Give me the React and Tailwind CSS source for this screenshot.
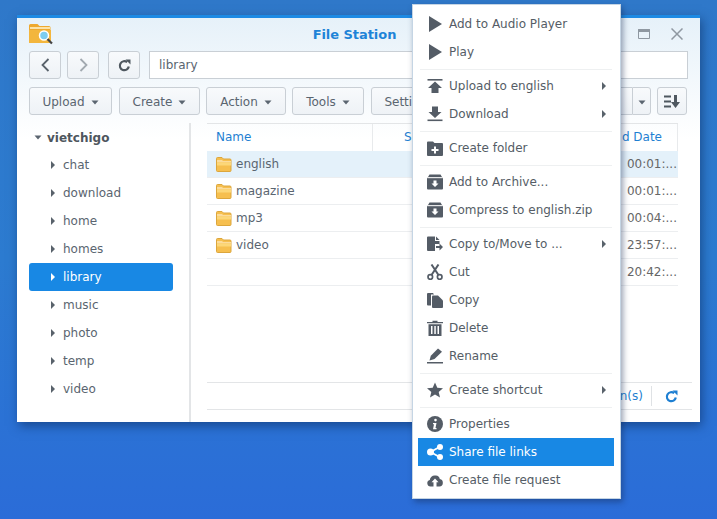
import React from "react";

const Caret = ({ className = "" }) => (
  <svg width="8" height="5" viewBox="0 0 8 5" className={className}><path d="M0.5 0.5h7L4 4.5z" fill="#5b6570" /></svg>
);
const Tri = ({ color = "#59626b" }) => (
  <svg width="4" height="8" viewBox="0 0 4 8" className="shrink-0"><path d="M0 0l4 4-4 4z" fill={color} /></svg>
);

const Folder = () => (
  <svg width="16" height="15" viewBox="0 0 16 15" className="shrink-0">
    <path d="M0.500 1.500a1 1 0 0 1 1-1h4.500l1.500 1.500h6.500a1 1 0 0 1 1 1v10.500a1 1 0 0 1-1 1h-12.500a1 1 0 0 1-1-1z" fill="#f6bf4f" stroke="#dca63c" strokeWidth="1" />
    <path d="M1 5.500h14V4H7L6 3H1z" fill="#fbdc9c" />
    <path d="M1 5.500h14v3H1z" fill="#fcd778" />
  </svg>
);

const c = "#545c66";
const icons = {
  play: <path d="M2 0l13 8-13 8z" fill={c} />,
  upload: <><path d="M0.500 1h15v1.600H0.500z" fill={c} /><path d="M8 3.500l7 6.500h-3.500v5h-7v-5H1z" fill={c} /></>,
  download: <><path d="M5 0.500h6v5.500h3.500L8 12 1.500 6H5z" fill={c} /><path d="M0.500 13.500h15v1.600H0.500z" fill={c} /></>,
  createFolder: <><path d="M0 2.500a1 1 0 0 1 1-1h5l1.500 1.500H15a1 1 0 0 1 1 1V15a1 1 0 0 1-1 1H1a1 1 0 0 1-1-1z" fill={c} /><path d="M7 6.500h2V9h2.500v2H9v2.500H7V11H4.500V9H7z" fill="#fff" /></>,
  archive: <><path d="M2.500 0.500h11L15 3H1z" fill={c} /><path d="M0 3.800h16V14.500a1 1 0 0 1-1 1H1a1 1 0 0 1-1-1z" fill={c} /><path d="M0 3.800h16" stroke="#fff" strokeWidth="0.600" /><path d="M6.500 6.500h3v3h2L8 13 4.500 9.500h2z" fill="#fff" /></>,
  copyMove: <><path d="M0 1.500a1 1 0 0 1 1-1h7v4.500h4.500v3H8v7H1a1 1 0 0 1-1-1z" fill={c} /><path d="M9 0.500l3.500 3.500H9z" fill={c} /><path d="M9 10h3.500V7.500L16 11l-3.500 3.500V12H9z" fill={c} /></>,
  cut: <><circle cx="3.300" cy="13" r="2.300" fill="none" stroke={c} strokeWidth="1.700" /><circle cx="12.700" cy="13" r="2.300" fill="none" stroke={c} strokeWidth="1.700" /><path d="M4.500 11L11.500 0.500M11.500 11L4.500 0.500" stroke={c} strokeWidth="2" /></>,
  copy: <><path d="M0 2a1 1 0 0 1 1-1h5l1 1.500H4v11H1a1 1 0 0 1-1-1z" fill={c} /><path d="M5 4.500a1 1 0 0 1 1-1h5l5 5V15a1 1 0 0 1-1 1H6a1 1 0 0 1-1-1z" fill={c} /></>,
  delete: <><path d="M0 2h5.500V0.700h5V2H16v1.300H0z" fill={c} /><path d="M1.500 4.300h13V16h-13zM4 6v8h1.500V6zM7.300 6v8h1.500V6zM10.500 6v8H12V6z" fill={c} fillRule="evenodd" /></>,
  rename: <><path d="M11 0.500l4 3.200-7.500 7.300-5 1.500 1.300-4.800z" fill={c} /><path d="M0 14h16v1.500H0z" fill={c} /></>,
  star: <path d="M8 0.500l2.300 5.200 5.700 0.500-4.300 3.800 1.300 5.500L8 12.600 3 15.500l1.300-5.500L0 6.200l5.700-0.500z" fill={c} />,
  info: <><circle cx="8" cy="8" r="8" fill={c} /><path d="M8.500 2.800a1.300 1.300 0 1 1 0 2.600 1.300 1.300 0 0 1 0-2.600zM6 7h3.500l-1 5h1v1.200H6l1-5H6z" fill="#fff" /></>,
  share: <><path d="M12.500 3L3.500 8l9 5" fill="none" stroke="#fff" strokeWidth="1.800" /><circle cx="13" cy="3" r="3" fill="#fff" /><circle cx="13" cy="13" r="3" fill="#fff" /><circle cx="3.500" cy="8" r="3.500" fill="#fff" /></>,
  request: <><path d="M3.500 14.500A3.300 3.300 0 0 1 2.800 8 4.800 4.800 0 0 1 8 3.500 4.300 4.300 0 0 1 12.800 7a3.800 3.800 0 0 1-0.300 7.500z" fill={c} /><path d="M8 6.500l3.500 3.800H9.500v4.700h-3v-4.700h-2z" fill="#fff" /></>,
};

const MenuIcon = ({ name }) => (
  <svg width="16" height="16" viewBox="0 0 16 16" className="shrink-0">{icons[name]}</svg>
);

const groups = [
  [["play", "Add to Audio Player"], ["play", "Play"]],
  [["upload", "Upload to english", true], ["download", "Download", true]],
  [["createFolder", "Create folder"]],
  [["archive", "Add to Archive..."], ["archive", "Compress to english.zip"]],
  [["copyMove", "Copy to/Move to ...", true], ["cut", "Cut"], ["copy", "Copy"], ["delete", "Delete"], ["rename", "Rename"]],
  [["star", "Create shortcut", true]],
  [["info", "Properties"], ["share", "Share file links", false, true], ["request", "Create file request"]],
];

const Btn = ({ w, children, className = "" }) => (
  <div className={`${w} h-[28px] shrink-0 flex items-center justify-center gap-[6px] rounded-[3px] border border-[#c9cfd5] bg-gradient-to-b from-[#f8fafc] to-[#eef2f6] text-[#5a6570] ${className}`}>{children}</div>
);

const tree = ["chat", "download", "home", "homes", "library", "music", "photo", "temp", "video"];
const rows = [["english", "00:01:..."], ["magazine", "00:01:..."], ["mp3", "00:04:..."], ["video", "23:57:..."], ["", "20:42:..."]];

const Refresh = ({ color }) => (
  <svg width="13" height="13" viewBox="0 0 13 13"><path d="M10.800 7.500A4.500 4.500 0 1 1 9.200 3.200" fill="none" stroke={color} strokeWidth="2.200" /><path d="M7.500 0.500h5V5.500z" fill={color} /></svg>
);

export default function App() {
  return (
    <div className="relative w-[717px] h-[519px] overflow-hidden bg-gradient-to-b from-[#2f78c9] via-[#2c7bd0] to-[#2b6cd8] pl-[17px] pt-[15px] text-[12px] [font-family:'DejaVu_Sans',sans-serif]">
      {/* Window */}
      <div className="w-[683px] h-[407px] flex flex-col border-t-[3px] border-[#1d8ae4] bg-gradient-to-b from-[#e6f1f9] from-0% to-[#ffffff] to-[30%] shadow-[2px_4px_10px_rgba(10,40,90,0.55)]">
        {/* Title */}
        <div className="relative h-[33px] shrink-0 flex items-center justify-center">
          <svg width="26" height="22" viewBox="0 0 26 22" className="absolute left-[11px] top-[5px]">
            <path d="M1 2.500a1.500 1.500 0 0 1 1.500-1.500h7l2 2h9.500a1.500 1.500 0 0 1 1.500 1.500V19a1 1 0 0 1-1 1H2a1 1 0 0 1-1-1z" fill="#eea92f" />
            <path d="M2 4h20v2H2z" fill="#fbe3a8" />
            <path d="M1 7h22v12a1 1 0 0 1-1 1H2a1 1 0 0 1-1-1z" fill="#f3b63d" />
            <circle cx="16" cy="12.500" r="4.500" fill="#7ccdf0" stroke="#fff" strokeWidth="1.500" />
            <path d="M19.500 16l4.500 4.500" stroke="#444" strokeWidth="2.200" />
          </svg>
          <span className="font-bold text-[13px] text-[#1e84d8] ml-[-8px] tracking-[-0.05px]">File Station</span>
          <svg width="12" height="10" viewBox="0 0 12 10" className="absolute left-[621px] top-[11px]">
            <path d="M0.500 0.500h11v9h-11z" fill="none" stroke="#8f98a1" /><path d="M0.500 0.500h11v2h-11z" fill="#8f98a1" stroke="#8f98a1" />
          </svg>
          <svg width="12" height="12" viewBox="0 0 12 12" className="absolute left-[654px] top-[10px]">
            <path d="M0.500 0.500l11 11M11.500 0.500l-11 11" stroke="#8f98a1" strokeWidth="1.500" />
          </svg>
        </div>
        {/* Nav row */}
        <div className="flex items-center pl-[12px] h-[28px] shrink-0">
          <Btn w="w-[32px]">
            <svg width="9" height="14" viewBox="0 0 9 14"><path d="M7.500 1L1.500 7l6 6" fill="none" stroke="#59626b" strokeWidth="1.800" /></svg>
          </Btn>
          <Btn w="w-[32px]" className="ml-[6px]">
            <svg width="9" height="14" viewBox="0 0 9 14"><path d="M1.500 1l6 6-6 6" fill="none" stroke="#a2a9b0" strokeWidth="1.800" /></svg>
          </Btn>
          <Btn w="w-[32px]" className="ml-[9px]">
            <Refresh color="#4f5860" />
          </Btn>
          <div className="ml-[9px] w-[539px] h-[28px] flex items-center pl-[9px] border border-[#c9cfd5] bg-white text-[#5a6570]">library</div>
        </div>
        {/* Toolbar */}
        <div className="flex items-center pl-[12px] mt-[8px] h-[28px] shrink-0">
          <Btn w="w-[83px]" className="pt-[2px]">Upload<Caret /></Btn>
          <Btn w="w-[81px]" className="ml-[7px] pt-[2px]">Create<Caret /></Btn>
          <Btn w="w-[80px]" className="ml-[6px] pt-[2px]">Action<Caret /></Btn>
          <Btn w="w-[72px]" className="ml-[6px] pt-[2px]">Tools<Caret /></Btn>
          <Btn w="w-[90px]" className="ml-[7px] pt-[2px]">Settings<Caret /></Btn>
          <Btn w="w-[90px]" className="ml-[81px] rounded-r-none border-r-0" />
          <Btn w="w-[19px]" className="rounded-l-none pt-[2px]"><Caret /></Btn>
          <Btn w="w-[30px]" className="ml-[6px]">
            <svg width="16" height="13" viewBox="0 0 16 13"><path d="M0 0.500h7v2H0zM0 5.500h7v2H0zM0 10.500h7v2H0z" fill="#4f5860" /><path d="M10 0h3v7h3l-4.500 6L7 7h3z" fill="#4f5860" /></svg>
          </Btn>
        </div>
        {/* Main */}
        <div className="flex-1 flex min-h-0 mt-[8px]">
          <div className="w-[174px] shrink-0 border-r-[2px] border-[#e3e5e7] pl-[12px] pr-[16px]">
            <div className="h-[27px] flex items-center pl-[5px] gap-[5px] text-[#4e565e] font-bold mt-[1px]">
              <Caret />vietchigo
            </div>
            {tree.map((t) => {
              const sel = t === "library";
              return (
                <div key={t} className={`h-[28px] flex items-center pl-[22px] gap-[8px] rounded-[3px] ${sel ? "bg-[#1888e4] text-white" : "text-[#5a6570]"}`}>
                  <Tri color={sel ? "#fff" : "#59626b"} />{t}
                </div>
              );
            })}
          </div>
          <div className="flex-1 flex flex-col pl-[16px] pr-[22px]">
            <div className="h-[28px] flex items-center shrink-0 border-t border-[#e3e5e7] text-[#1e7fd2]">
              <div className="w-[166px] h-full flex items-center pl-[9px] pb-[2px] border-r border-[#e8eaec]">Name</div>
              <div className="pl-[31px] pb-[2px] flex-1">S</div>
              <div className="w-[17px] h-full border-r border-[#e8eaec] flex items-center justify-end pr-[15px] pb-[2px] whitespace-nowrap">d Date</div>
            </div>
            {rows.map(([n, d], i) => (
              <div key={i} className={`h-[27px] shrink-0 flex items-center justify-between border-b border-[#eceef0] text-[#5a6570] ${i === 0 ? "bg-[#e4f1fa]" : ""}`}>
                <div className="flex items-center gap-[4px] pl-[9px]">{n && <Folder />}{n}</div>
                <span className="pr-[1px] text-[#666]">{d}</span>
              </div>
            ))}
            <div className="mt-[96px] mr-[-14px] h-[28px] shrink-0 flex items-center justify-end border-y border-[#e3e5e7]">
              <span className="text-[#1e7fd2] mr-[8px]">n(s)</span>
              <div className="w-px h-[20px] bg-[#dfe2e5] mr-[13px]" />
              <div className="mr-[14px] flex"><Refresh color="#1e7fd2" /></div>
            </div>
          </div>
        </div>
      </div>

      {/* Context menu */}
      <div className="absolute left-[412px] top-[4px] w-[209px] h-[495px] pt-[5px] pl-[5px] pr-[6px] border border-[#c5d5e4] bg-white shadow-[2px_3px_6px_rgba(20,40,80,0.45)]">
        {groups.map((g, gi) => (
          <div key={gi}>
            {gi > 0 && <div className="mx-[2px] mt-[3px] mb-[2px] h-px bg-[#eef0f1]" />}
            {g.map(([ic, label, sub, active]) => (
              <div key={label} className={`h-[28px] flex items-center pl-[9px] ${active ? "bg-[#1888e4] text-white" : "text-[#555d66]"}`}>
                <MenuIcon name={ic} />
                <span className="ml-[6px] flex-1 whitespace-nowrap">{label}</span>
                {sub && <span className="mr-[8px] flex"><Tri /></span>}
              </div>
            ))}
          </div>
        ))}
      </div>
    </div>
  );
}
